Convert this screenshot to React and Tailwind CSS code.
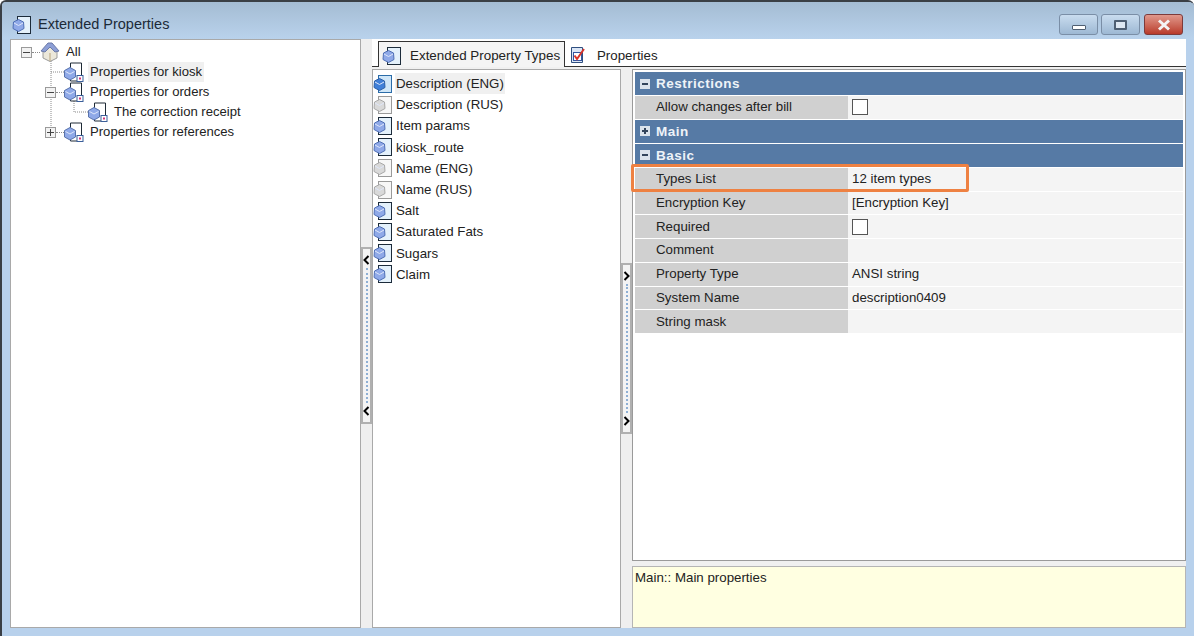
const font = { fontFamily: '"Liberation Sans", Arial, sans-serif' }

function PropIcon({ gray, active }) {
  const fill = gray ? '#d9d9d9' : active ? '#3f7fd8' : '#8fa9e8'
  const dark = gray ? '#a8a8a8' : active ? '#2a5fa8' : '#4f6fb5'
  const stroke = gray ? '#9a9a9a' : active ? '#2b6ca8' : '#1c2b3a'
  const page = gray ? '#f7f7f7' : active ? '#cfe6f8' : '#e4f1fb'
  return (
    <svg width="20" height="20" viewBox="0 0 20 20" className="shrink-0">
      <rect x="5.5" y="1.5" width="13" height="17" fill={page} stroke={stroke} />
      <path d="M6.5 4.5 L11.5 7 L12 13.5 L6.5 16.5 L1 13.5 L1.5 7 Z" fill={fill} stroke={dark} />
      <path d="M2 8 L6.5 10.5 L11 8" fill="none" stroke="#dfe7fa" />
    </svg>
  )
}

function NodeIcon() {
  return (
    <svg width="20" height="20" viewBox="0 0 20 20" className="shrink-0">
      <path d="M6.5 1 H17.5 V19 H6.5 Z" fill="#fff" stroke="#1e2a36" />
      <path d="M6 5.5 L11.5 8.5 V15 L6 18 L0.5 15 V8.5 Z" fill="#8fa9e8" stroke="#5873ad" />
      <path d="M1.5 9.5 L6 12 L10.5 9.5" fill="none" stroke="#dfe7fa" />
      <rect x="13" y="13.5" width="6" height="6" fill="#fff" stroke="#3b5f9a" />
      <rect x="15" y="15.5" width="2" height="2" fill="#d0387a" />
    </svg>
  )
}

function HomeIcon() {
  return (
    <svg width="20" height="20" viewBox="0 0 20 20" className="shrink-0">
      <path d="M3 9 L3 16 L10 19.5 L17 16 V9 L10 5 Z" fill="#ece8da" stroke="#9a9a9a" />
      <path d="M1 9 L8 1 H12 L19 9 L15 10 L10 5 L5 10 Z" fill="#8d9fd6" stroke="#6b7aa8" />
      <path d="M10 11 V19" stroke="#b9a57d" />
    </svg>
  )
}

function ExpandBox({ plus }) {
  return (
    <span className="relative flex h-[11px] w-[11px] shrink-0 items-center justify-center border border-[#9a9a9a] bg-[#f2f2f2]">
      <span className="h-px w-[7px] bg-[#444]" />
      {plus && <span className="absolute h-[7px] w-px bg-[#444]" />}
    </span>
  )
}

function TreeRow({ indent, box, plus, icon, label, selected }) {
  return (
    <div className="relative flex h-5 items-center" style={{ paddingLeft: indent }}>
      <span className="flex w-[11px] shrink-0 items-center">{box && <ExpandBox plus={plus} />}</span>
      <span className={'h-0 w-[8px] shrink-0 ' + (box ? 'border-t border-dotted border-[#8a8a8a]' : '')} />
      {icon}
      <span className={'ml-[4px] px-[2px] leading-5 text-[#222] ' + (selected ? 'bg-[#f0f0f0]' : '')}>{label}</span>
    </div>
  )
}

function Chevron({ dir }) {
  return (
    <svg width="7" height="10" viewBox="0 0 7 10" className="shrink-0">
      <path d={dir === 'left' ? 'M5.5 1 L1.5 5 L5.5 9' : 'M1.5 1 L5.5 5 L1.5 9'} fill="none" stroke="#000" strokeWidth="2" />
    </svg>
  )
}

function Splitter({ side, top, bottom }) {
  return (
    <div className="flex w-[11px] shrink-0 flex-col bg-[#efefef]" style={{ paddingTop: top, paddingBottom: bottom }}>
      <div className="flex flex-1 flex-col items-center justify-between border-2 border-[#b0b0b0] bg-[#f4f4f4] py-[6px]">
        <Chevron dir={side} />
        <span className="my-[3px] w-0 flex-1 border-l-2 border-dotted border-[#8fb0d4]" />
        <Chevron dir={side} />
      </div>
    </div>
  )
}

function SectionHead({ label, plus, h = 'h-[23px]' }) {
  return (
    <div className={'mb-px flex items-center gap-[6px] bg-[#567aa5] pl-[5px] ' + h}>
      <span className="relative flex h-[10px] w-[10px] items-center justify-center bg-[#dbe3ec]">
        <span className="h-[2px] w-[6px] bg-[#33455c]" />
        {plus && <span className="absolute h-[6px] w-[2px] bg-[#33455c]" />}
      </span>
      <span className="pt-px text-[13.5px] font-bold tracking-[0.5px] text-[#eef3f8]">{label}</span>
    </div>
  )
}

function PropRow({ label, value, check }) {
  return (
    <div className="mb-px flex h-[22.75px] text-[#222]">
      <div className="flex w-[213px] shrink-0 items-center bg-[#d0d0d0] pl-[21px]">{label}</div>
      <div className="flex flex-1 items-center bg-[#f4f4f4] pl-[4px]">
        {check ? <span className="h-[16px] w-[16px] border border-[#555] bg-white" /> : value}
      </div>
    </div>
  )
}

function WinButton({ className, children }) {
  return (
    <div className={'flex h-[21px] w-[39px] items-center justify-center rounded-[3px] border ' + className}>{children}</div>
  )
}

const types = [
  { name: 'Description (ENG)', active: true },
  { name: 'Description (RUS)', gray: true },
  { name: 'Item params' },
  { name: 'kiosk_route' },
  { name: 'Name (ENG)', gray: true },
  { name: 'Name (RUS)', gray: true },
  { name: 'Salt' },
  { name: 'Saturated Fats' },
  { name: 'Sugars' },
  { name: 'Claim' },
]

export default function App() {
  return (
    <div style={font} className="flex h-[636px] w-[1194px] flex-col overflow-hidden rounded-t-md border-t-2 border-l-2 border-[#3a3f45] bg-[#b8d1ec] text-[13.3px]">
      {/* title bar */}
      <div className="flex h-[37px] shrink-0 items-center bg-gradient-to-b from-[#a4bcd3] to-[#b9d2ec] pt-[8px] pr-[11px] pl-[10px]">
        <PropIcon />
        <span className="ml-[6px] text-[14.5px] text-[#1c2a38]">Extended Properties</span>
        <div className="ml-auto flex gap-[3px]">
          <WinButton className="border-[#7a8ea6] bg-gradient-to-b from-[#c9dcef] to-[#9db8d3]">
            <span className="mt-[6px] h-[5px] w-[14px] rounded-[1px] border border-[#4f5f72] bg-white" />
          </WinButton>
          <WinButton className="border-[#7a8ea6] bg-gradient-to-b from-[#c9dcef] to-[#9db8d3]">
            <span className="h-[10px] w-[13px] rounded-[1px] border-2 border-[#4f5f72] bg-[#dfe8f2]" />
          </WinButton>
          <WinButton className="ml-px border-[#7d3b3b] bg-gradient-to-b from-[#e0988c] to-[#b8392a]">
            <svg width="16" height="12" viewBox="0 0 16 12">
              <path d="M3 1.5 L13 10.5 M13 1.5 L3 10.5" stroke="#f4f4f4" strokeWidth="3" />
            </svg>
          </WinButton>
        </div>
      </div>

      {/* body */}
      <div className="flex min-h-0 flex-1 pr-[8px] pb-[8px] pl-[8px]">
        {/* tree */}
        <div className="relative w-[351px] shrink-0 border border-[#a9a9a9] bg-white pt-[2px] pl-[10px] text-[13.1px]">
          <svg className="absolute top-0 left-0" width="120" height="110">
            <path d="M40 21 V92 M40 32 H53 M63 61 V72 H77" stroke="#8a8a8a" strokeDasharray="1 1" fill="none" />
          </svg>
          <TreeRow indent={0} box icon={<HomeIcon />} label="All" />
          <TreeRow indent={24} icon={<NodeIcon />} label="Properties for kiosk" selected />
          <TreeRow indent={24} box icon={<NodeIcon />} label="Properties for orders" />
          <TreeRow indent={48} icon={<NodeIcon />} label="The correction receipt" />
          <TreeRow indent={24} box plus icon={<NodeIcon />} label="Properties for references" />
        </div>

        <Splitter side="left" top={208} bottom={204} />

        {/* right side with tabs */}
        <div className="flex min-w-0 flex-1 flex-col bg-[#f0f0f0]">
          <div className="flex h-[28px] shrink-0 items-end border-b border-[#333] bg-white pl-[6px]">
            <div className="-mb-px flex h-[26px] w-[187px] items-center border border-b-0 border-[#333] bg-[#f4f4f4] pt-[3px] pl-[3px] text-[13.4px]">
              <PropIcon />
              <span className="mt-px ml-[8px] whitespace-nowrap text-[#222]">Extended Property Types</span>
            </div>
            <div className="flex h-[25px] items-center pt-[2px] pl-[4px]">
              <svg width="18" height="18" viewBox="0 0 18 18">
                <path d="M2.5 1.5 H13.5 V16.5 H2.5 Z" fill="#dbe6f6" stroke="#2f4f80" />
                <rect x="4.5" y="6.5" width="8" height="8" fill="#fff" stroke="#3457a0" />
                <path d="M5.5 9.5 L8 13 L15 3" fill="none" stroke="#d8352a" strokeWidth="2" />
              </svg>
              <span className="mt-[2px] ml-[10px] text-[#222]">Properties</span>
            </div>
          </div>

          <div className="flex min-h-0 flex-1 pt-[2px]">
            {/* type list */}
            <div className="w-[249px] shrink-0 border border-[#a9a9a9] bg-white pt-[3px]">
              {types.map((t) => (
                <div key={t.name} className="flex h-[21.2px] items-center text-[#222]">
                  <PropIcon gray={t.gray} active={t.active} />
                  <span className={'ml-[2px] px-[1px] leading-[21px] ' + (t.active ? 'bg-[#f0f0f0]' : '')}>{t.name}</span>
                </div>
              ))}
            </div>

            <Splitter side="right" top={194} bottom={194} />

            {/* property grid + description */}
            <div className="relative flex min-w-0 flex-1 flex-col">
              <div className="min-h-0 flex-1 border border-[#9a9a9a] bg-white px-[2px] pt-[2px]">
                <SectionHead label="Restrictions" />
                <PropRow label="Allow changes after bill" check />
                <SectionHead label="Main" plus />
                <SectionHead label="Basic" />
                <PropRow label="Types List" value="12 item types" />
                <PropRow label="Encryption Key" value="[Encryption Key]" />
                <PropRow label="Required" check />
                <PropRow label="Comment" />
                <PropRow label="Property Type" value="ANSI string" />
                <PropRow label="System Name" value="description0409" />
                <PropRow label="String mask" />
              </div>
              <div className="mt-[5px] h-[62px] shrink-0 border border-[#b5b5b5] bg-[#ffffe1] px-[2px] pt-px text-[#222]">Main:: Main properties</div>
              {/* highlight drawn over the grid */}
              <div className="absolute top-[95px] -left-px h-[28px] w-[338px] rounded-[2px] border-[3px] border-[#ee8142]" />
            </div>
          </div>
        </div>
      </div>
    </div>
  )
}
